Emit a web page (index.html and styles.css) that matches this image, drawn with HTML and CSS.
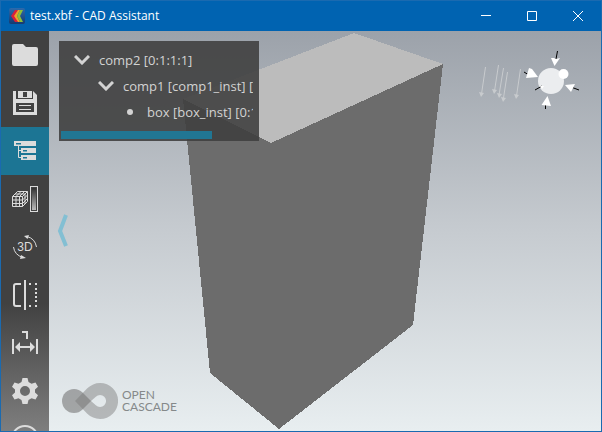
FILE: index.html
```html
<!DOCTYPE html>
<html lang="en">
<head>
<meta charset="utf-8">
<title>test.xbf - CAD Assistant</title>
<link rel="stylesheet" href="styles.css">
</head>
<body>
<div class="window">
  <header class="titlebar">
    <svg class="app-icon" viewBox="0 0 16 16" aria-hidden="true">
      <defs><linearGradient id="app-bg" x2="0" y2="1"><stop stop-color="#2c6aac"/><stop offset="1" stop-color="#163a70"/></linearGradient></defs>
      <rect width="16" height="16" rx="2" fill="url(#app-bg)"/>
      <path d="M6 2h3L6 8l3 6H6L2 8z" fill="#d8203c"/>
      <path d="M9 2h2L8 8l3 6H9L5 8z" fill="#f0a028"/>
      <path d="M11 2h3l-3 6 3 6h-3L8 8z" fill="#8cc03a"/>
    </svg>
    <h1 class="title">test.xbf - CAD Assistant</h1>
    <div class="window-controls">
      <button class="control" aria-label="Minimize"><svg viewBox="0 0 12 12"><path d="M1 5.500h10"/></svg></button>
      <button class="control" aria-label="Maximize"><svg viewBox="0 0 12 12"><path d="M1.500 1.500h9v9h-9z"/></svg></button>
      <button class="control" aria-label="Close"><svg viewBox="0 0 12 12"><path d="M1 1l10 10M11 1L1 11"/></svg></button>
    </div>
  </header>

  <div class="workspace">
    <nav class="toolbar" aria-label="Tools">
      <button class="tool" aria-label="Open"><svg viewBox="0 0 48 48"><path class="fill" d="M13 13h9l3 3h10q2 0 2 2v15q0 2-2 2H13q-2 0-2-2V15q0-2 2-2z"/></svg></button>
      <button class="tool" aria-label="Save"><svg viewBox="0 0 48 48"><path class="fill" fill-rule="evenodd" d="M12 12h3v8h17v-8l4 4v20H12zM15 24v9h18v-9zM17 12h14v7H17zM22 13v5h4v-5z"/><path class="line" d="M18 26.500h12M18 30.500h12"/></svg></button>
      <button class="tool active" aria-label="Model tree" aria-pressed="true"><svg viewBox="0 0 48 48"><path class="fill" fill-rule="evenodd" d="M13 14h22v5H13zM15 16v1.500h5V16zM20 21h15v5H20zM22 23v1.500h4V23zM20 28h15v5H20zM22 30v1.500h4V30z"/><path class="line" d="M17.500 19v11.500H20M17.500 23.500H20"/></svg></button>
      <button class="tool" aria-label="Display mode"><svg viewBox="0 0 48 48">
        <defs><linearGradient id="ramp" x2="0" y2="1"><stop stop-color="#333"/><stop offset="1" stop-color="#bbb"/></linearGradient></defs>
        <path class="line" d="M11.500 21.500h10v10h-10zM15 21.500v10M18.500 21.500v10M11.500 25h10M11.500 28.500h10M11.500 21.500l5-5h10v10l-5 5M21.500 21.500l5-5M15 21.500l5-5M18.500 21.500l5-5M14 19h10v10M21.500 25l5-5M21.500 28.500l5-5"/>
        <rect class="line" x="29.500" y="11.500" width="7" height="25"/><rect x="31" y="13" width="4" height="22" fill="url(#ramp)"/></svg></button>
      <button class="tool" aria-label="3D rotation"><svg viewBox="0 0 48 48"><text class="icon-text" x="24" y="28" text-anchor="middle">3D</text><path class="line" d="M26 13.500Q34 15.500 35.500 24M22 34.500Q13.500 32 12.500 24"/><path class="fill" d="M23 13l5-1-1.500 4zM25 35l-5-3-1 4z"/></svg></button>
      <button class="tool" aria-label="Section"><svg viewBox="0 0 48 48"><path class="thick" d="M20 13h-5q-2 0-2 2v18q0 2 2 2h5"/><path class="thick" d="M24 9v30"/><path class="fill" d="M28 12h2v2h-2zM34 12h2v2h-2zM34 17h2v2h-2zM34 21h2v2h-2zM34 25h2v2h-2zM34 29h2v2h-2zM34 34h2v2h-2zM28 34h2v2h-2z"/></svg></button>
      <button class="tool" aria-label="Measure"><svg viewBox="0 0 48 48"><path class="thick" d="M12 20v15M36 20v15M16 28h16M21 13h5v7"/><path class="fill" d="M14 28l5-5v10zM34 28l-5-5v10z"/></svg></button>
      <button class="tool" aria-label="Settings"><svg viewBox="0 0 48 48"><path class="fill" fill-rule="evenodd" d="M21.500 11h5l1 4 3 1.700 4-1.300 2.500 4.300-3 2.800v3l3 2.800-2.500 4.300-4-1.300-3 1.700-1 4h-5l-1-4-3-1.700-4 1.300L11 28.300l3-2.800v-3l-3-2.800 2.500-4.300 4 1.300 3-1.700zM24 19a5 5 0 1 0 0 10a5 5 0 1 0 0-10z"/></svg></button>
      <button class="tool" aria-label="Information"><svg viewBox="0 0 48 48"><circle class="thick" cx="24" cy="24" r="13"/><path class="thick" d="M24 23v7M24 18v2"/></svg></button>
    </nav>

    <main class="viewport">
      <svg class="model" viewBox="49 31 552 400" role="img" aria-label="Shaded box model">
        <path d="M354 33L443 64L271 143L183 99z" fill="#bcbcbc"/>
        <path d="M183 99L271 143L443 64L413 325L279 429L210 373z" fill="#6c6c6c"/>
      </svg>

      <svg class="lights" viewBox="471 41 120 80" aria-hidden="true">
        <g class="rays">
          <path d="M485.500 67L481.500 94M498.500 65L494.500 91M503.500 68L499 95M507.500 72L503.500 98M520.500 69L516.500 96"/>
          <path class="tips" d="M479 92l5 1-3 4zM492 89l5 1-3 4zM497 93l5 1-3 4zM501 97l5 1-3 4zM514 94l5 1-3 4z"/>
        </g>
        <circle cx="551" cy="81" r="13" fill="#ebedef"/>
        <circle cx="563.500" cy="74" r="5" fill="#fff"/>
        <path d="M557.500 51L556 59M524 72l5 3M535 90l7-4M571 87l8 3M545.500 105v4" stroke="#000"/>
        <path d="M551 58l3 0 2 1 4-1-5.500 8zM529 68l3 1 6 8-12 1zM565 85l10-1-4 8zM547.500 96l3.500 10-9.500-1zM540 86h4l-2 3z" fill="#fff"/>
      </svg>

      <section class="tree-panel" aria-label="Model tree">
        <ul class="tree">
          <li class="row"><button class="toggle" aria-label="Collapse comp2"><svg viewBox="0 0 16 10"><path d="M1 1l7 7 7-7"/></svg></button><span>comp2 [0:1:1:1]</span></li>
          <li class="row child"><button class="toggle" aria-label="Collapse comp1"><svg viewBox="0 0 16 10"><path d="M1 1l7 7 7-7"/></svg></button><span>comp1 [comp1_inst] [0:1:1:2]</span></li>
          <li class="row leaf"><span class="bullet"></span><span>box [box_inst] [0:1:1:3]</span></li>
        </ul>
        <div class="scrollbar"></div>
      </section>

      <button class="collapse" aria-label="Hide panel"><svg viewBox="0 0 12 34"><path d="M9 1L3 17l6 15"/></svg></button>

      <div class="brand">
        <svg viewBox="62 383 56 36" aria-hidden="true">
          <path d="M91 401L82.500 392.500A12 12 0 1 0 82.500 409.500z" fill="#777" fill-opacity=".6"/>
          <path fill-rule="evenodd" d="M75 401L87.300 388.300A18 18 0 1 1 87.300 413.700zM91 401L95.800 405.200A6 6 0 1 0 95.800 396.800z" fill="#777" fill-opacity=".45"/>
        </svg>
        <p class="brand-name"><span>OPEN</span><span>CASCADE</span></p>
      </div>
    </main>
  </div>
</div>
</body>
</html>
```
FILE: styles.css
```css
* { box-sizing: border-box; }

body { margin: 0; font-family: "Open Sans", "Noto Sans", sans-serif; }

button {
  padding: 0;
  border: 0;
  background: none;
  color: inherit;
}

svg { display: block; fill: none; }

.window {
  display: flex;
  flex-direction: column;
  height: 100vh;
  border: 1px solid #1a6ab0;
  overflow: hidden;
}

.titlebar {
  display: flex;
  align-items: center;
  flex: none;
  height: 30px;
  padding-left: 8px;
  gap: 5px;
  background: #0063b1;
  color: #fff;
}

.app-icon { width: 16px; height: 16px; }

.title {
  flex: 1;
  margin: 0;
  font-size: 12px;
  font-weight: 400;
  line-height: 16px;
}

.window-controls { display: flex; height: 100%; }

.control {
  display: grid;
  place-items: center;
  width: 46px;
}

.control svg { width: 12px; height: 12px; stroke: #fff; }

.workspace { display: flex; flex: 1; min-height: 0; }

.toolbar {
  flex: none;
  width: 48px;
  overflow: hidden;
  background: linear-gradient(#414141 68%, #7e7e7e);
  color: #dcdcdc;
}

.tool { display: block; width: 48px; height: 48px; }
.tool svg { width: 48px; height: 48px; }
.tool.active { background: #1c7594; }

.fill { fill: currentColor; }
.line { stroke: currentColor; }
.thick { stroke: currentColor; stroke-width: 2; }
.icon-text { fill: currentColor; font: 12px "Liberation Sans", sans-serif; }

.viewport {
  position: relative;
  flex: 1;
  min-width: 0;
  background: linear-gradient(#9ca2aa, #c6cbd0 50%, #e8eef0);
}

.model { width: 100%; height: 100%; shape-rendering: crispEdges; }

.lights {
  position: absolute;
  top: 10px;
  right: 10px;
  width: 120px;
  height: 80px;
}

.rays { stroke: #c8cbce; }
.tips { fill: #c8cbce; stroke: none; }

.tree-panel {
  position: absolute;
  top: 10px;
  left: 10px;
  width: 200px;
  padding: 6px 6px 2px 2px;
  background: rgba(64, 64, 64, .9);
  color: #d3d3d3;
}

.tree {
  margin: 0;
  padding: 0 0 6px;
  overflow: hidden;
  list-style: none;
  font-size: 13px;
}

.row {
  display: flex;
  align-items: center;
  gap: 9px;
  height: 26px;
  padding-left: 13px;
  white-space: nowrap;
}

.child { padding-left: 37px; }
.leaf { padding-left: 61px; }

.toggle, .bullet { flex: none; width: 16px; }
.toggle svg { width: 16px; height: 10px; stroke: currentColor; stroke-width: 3; }

.bullet::before {
  content: "";
  display: block;
  width: 6px;
  height: 6px;
  margin: auto;
  border-radius: 50%;
  background: currentColor;
}

.scrollbar { width: 151px; height: 8px; background: #217693; }

.collapse {
  position: absolute;
  top: 50%;
  left: 8px;
  width: 12px;
  height: 34px;
  transform: translateY(-50%);
}

.collapse svg { width: 12px; height: 34px; stroke: #83bfd3; stroke-width: 4; }

.brand {
  position: absolute;
  bottom: 12px;
  left: 13px;
  display: flex;
  align-items: center;
  gap: 4px;
}

.brand svg { width: 56px; height: 36px; }

.brand-name {
  display: grid;
  margin: 0;
  color: #85898a;
  font: 12px/12px Lato, sans-serif;
}
```
